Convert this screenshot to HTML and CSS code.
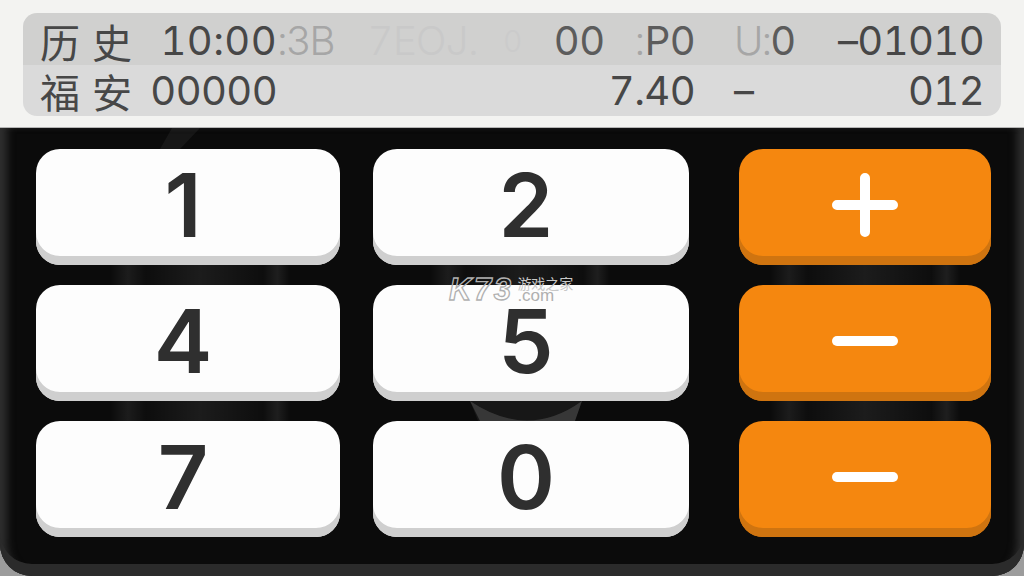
FILE: index.html
```html
<!DOCTYPE html>
<html lang="en">
<head>
    <meta charset="UTF-8">
    <meta name="viewport" content="width=device-width, initial-scale=1.0">
    <title>Calculator</title>
    <link rel="stylesheet" href="styles.css">
</head>
<body>
    <header class="top-bar">
        <div class="display">
            <div class="display-row row-upper">
                <span class="label">历史</span>
                <span class="value wide">10:00</span>
                <span class="mid">
                    <span class="ghost ghost-a tight">:3B</span>
                    <span class="ghost ghost-b">7EOJ.</span>
                    <span class="ghost ghost-c">0</span>
                    <span class="faded mid-00">00</span>
                    <span class="faded mid-p0"><span class="ghost-a">:</span>P0</span>
                </span>
                <span class="third faded"><span class="ghost-a tight">U:</span>0</span>
                <span class="value">–01010</span>
            </div>
            <div class="display-row row-lower">
                <span class="label">福安</span>
                <span class="value">00000</span>
                <span class="mid mid-end">7.40</span>
                <span class="third">–</span>
                <span class="value">012</span>
            </div>
        </div>
    </header>

    <main class="pad">
        <!-- faint artwork behind the keys -->
        <svg class="backdrop" width="1024" height="448" viewBox="0 0 1024 448">
            <defs>
                <linearGradient id="band" x1="0" x2="1" y1="0" y2="0">
                    <stop offset="0" stop-color="#fff" stop-opacity="0"/>
                    <stop offset="0.1" stop-color="#fff" stop-opacity="0.07"/>
                    <stop offset="0.2" stop-color="#fff" stop-opacity="0.01"/>
                    <stop offset="0.5" stop-color="#fff" stop-opacity="0.07"/>
                    <stop offset="0.85" stop-color="#fff" stop-opacity="0.01"/>
                    <stop offset="0.93" stop-color="#fff" stop-opacity="0.08"/>
                    <stop offset="1" stop-color="#fff" stop-opacity="0"/>
                </linearGradient>
            </defs>
            <rect x="110" y="135" width="180" height="24" fill="url(#band)"/>
            <rect x="430" y="135" width="180" height="24" fill="url(#band)"/>
            <rect x="770" y="135" width="190" height="24" fill="url(#band)"/>
            <rect x="110" y="272" width="180" height="24" fill="url(#band)"/>
            <rect x="770" y="272" width="190" height="24" fill="url(#band)"/>
            <path d="M160 21 L172 0 L200 0 L180 21 Z" fill="#fff" fill-opacity="0.05"/>
            <path d="M470 273 L582 273 L575 293 L478 293 Z" fill="#fff" fill-opacity="0.05"/>
            <path d="M470 273 Q528 312 582 273 L575 293 L480 293 Z" fill="#fff" fill-opacity="0.14"/>
        </svg>

        <div class="keys">
            <div class="digits">
                <div class="key digit">1</div>
                <div class="key digit">2</div>
                <div class="key digit">4</div>
                <div class="key digit">5</div>
                <div class="key digit">7</div>
                <div class="key digit">0</div>
            </div>
            <div class="ops">
                <div class="key op">
                    <svg width="66" height="64" viewBox="0 0 66 64"><path d="M5 32H61M33 5V59" stroke="#fff" stroke-width="10" stroke-linecap="round"/></svg>
                </div>
                <div class="key op">
                    <svg width="66" height="64" viewBox="0 0 66 64"><path d="M5 32H61" stroke="#fff" stroke-width="10" stroke-linecap="round"/></svg>
                </div>
                <div class="key op">
                    <svg width="66" height="64" viewBox="0 0 66 64"><path d="M5 32H61" stroke="#fff" stroke-width="10" stroke-linecap="round"/></svg>
                </div>
            </div>
        </div>

        <div class="watermark">
            <span class="wm-logo">K73</span>
            <span class="wm-side">
                <span class="wm-cn">游戏之家</span>
                <span class="wm-com">.com</span>
            </span>
        </div>
    </main>
</body>
</html>
```

FILE: styles.css
```css
* {
    box-sizing: border-box;
}
html, body {
    margin: 0;
    height: 100%;
}
body {
    width: 1024px;
    height: 576px;
    overflow: hidden;
    background: #9c9c9c;
    font-family: Inter, "Noto Sans CJK SC", sans-serif;
}

/* top display */
.top-bar {
    height: 128px;
    padding: 13px 23px 11px;
    background: #f3f3f1;
    border-bottom: 1px solid #b5b5b5;
}
.display {
    height: 103px;
    border-radius: 14px;
    overflow: hidden;
}
.display-row {
    display: grid;
    grid-template-columns: 106px 131px 418px 1fr auto;
    align-items: center;
    padding: 0 17px;
    font-size: 40px;
    font-weight: 400;
    font-variant-numeric: tabular-nums;
    letter-spacing: -0.6px;
    color: #474747;
    line-height: 1;
}
.row-upper {
    height: 52px;
    padding-top: 3px;
    background: #d0d0cf;
}
.row-lower {
    height: 51px;
    background: #dadada;
}
.label {
    font-family: "Noto Sans CJK SC", sans-serif;
    font-size: 40px;
    letter-spacing: 12px;
    white-space: nowrap;
}
.value {
    text-align: right;
    white-space: nowrap;
}
.wide {
    letter-spacing: 0.4px;
}
.mid {
    display: flex;
    align-items: center;
    white-space: nowrap;
}
.mid-end {
    justify-content: flex-end;
}
.third {
    margin-left: 39px;
}
.faded {
    color: #5c5c5c;
}
.tight {
    letter-spacing: -2px;
}
.ghost-a {
    color: #a6a6a6;
    font-weight: 300;
}
.ghost-b {
    color: #c9c9c9;
    font-weight: 300;
    margin-left: 34px;
}
.ghost-c {
    color: #cbcbcb;
    font-weight: 300;
    margin-left: 25px;
    font-size: 30px;
}
.mid-00 {
    margin-left: auto;
}
.mid-p0 {
    margin-left: 30px;
}

/* keypad */
.pad {
    position: relative;
    height: 448px;
    padding: 21px 33px 0 36px;
    background: #0b0b0b;
    border-radius: 0 0 32px 32px;
    box-shadow: inset 0 -12px 0 #2b2b2b, inset 11px 0 8px -4px #2f2f2f, inset -11px 0 8px -4px #2f2f2f;
}
.backdrop {
    position: absolute;
    top: 0;
    left: 0;
}
.keys {
    position: relative;
    display: flex;
    gap: 50px;
}
.digits {
    display: grid;
    grid-template-columns: 304px 316px;
    grid-auto-rows: 116px;
    gap: 20px 33px;
}
.ops {
    display: grid;
    grid-template-columns: 252px;
    grid-auto-rows: 116px;
    gap: 20px;
}
.key {
    display: flex;
    align-items: center;
    justify-content: center;
    border-radius: 24px;
}
.digit {
    padding: 0 10px 4px 0;
    background: #fdfdfd;
    box-shadow: inset 0 -9px 0 #cfcfcf;
    font-size: 88px;
    font-weight: 600;
    color: #2f2f2f;
    line-height: 1;
}
.op {
    padding-bottom: 5px;
    background: #f5870f;
    box-shadow: inset 0 -9px 0 #cf7410;
}

/* site watermark */
.watermark {
    position: absolute;
    left: 449px;
    top: 146px;
    display: flex;
    align-items: center;
    gap: 4px;
}
.wm-logo {
    font-family: "Liberation Sans", sans-serif;
    font-size: 31px;
    font-weight: 700;
    font-style: italic;
    letter-spacing: 2.5px;
    color: transparent;
    -webkit-text-stroke: 1.3px #b0b0b0;
    line-height: 1;
}
.wm-side {
    display: flex;
    flex-direction: column;
    line-height: 1;
}
.wm-cn {
    font-family: "Noto Sans CJK SC", sans-serif;
    font-size: 14px;
    color: #c8c8c8;
}
.wm-com {
    font-family: "Liberation Sans", sans-serif;
    font-size: 17px;
    margin-top: -3px;
    color: #b0b0b0;
}
```
